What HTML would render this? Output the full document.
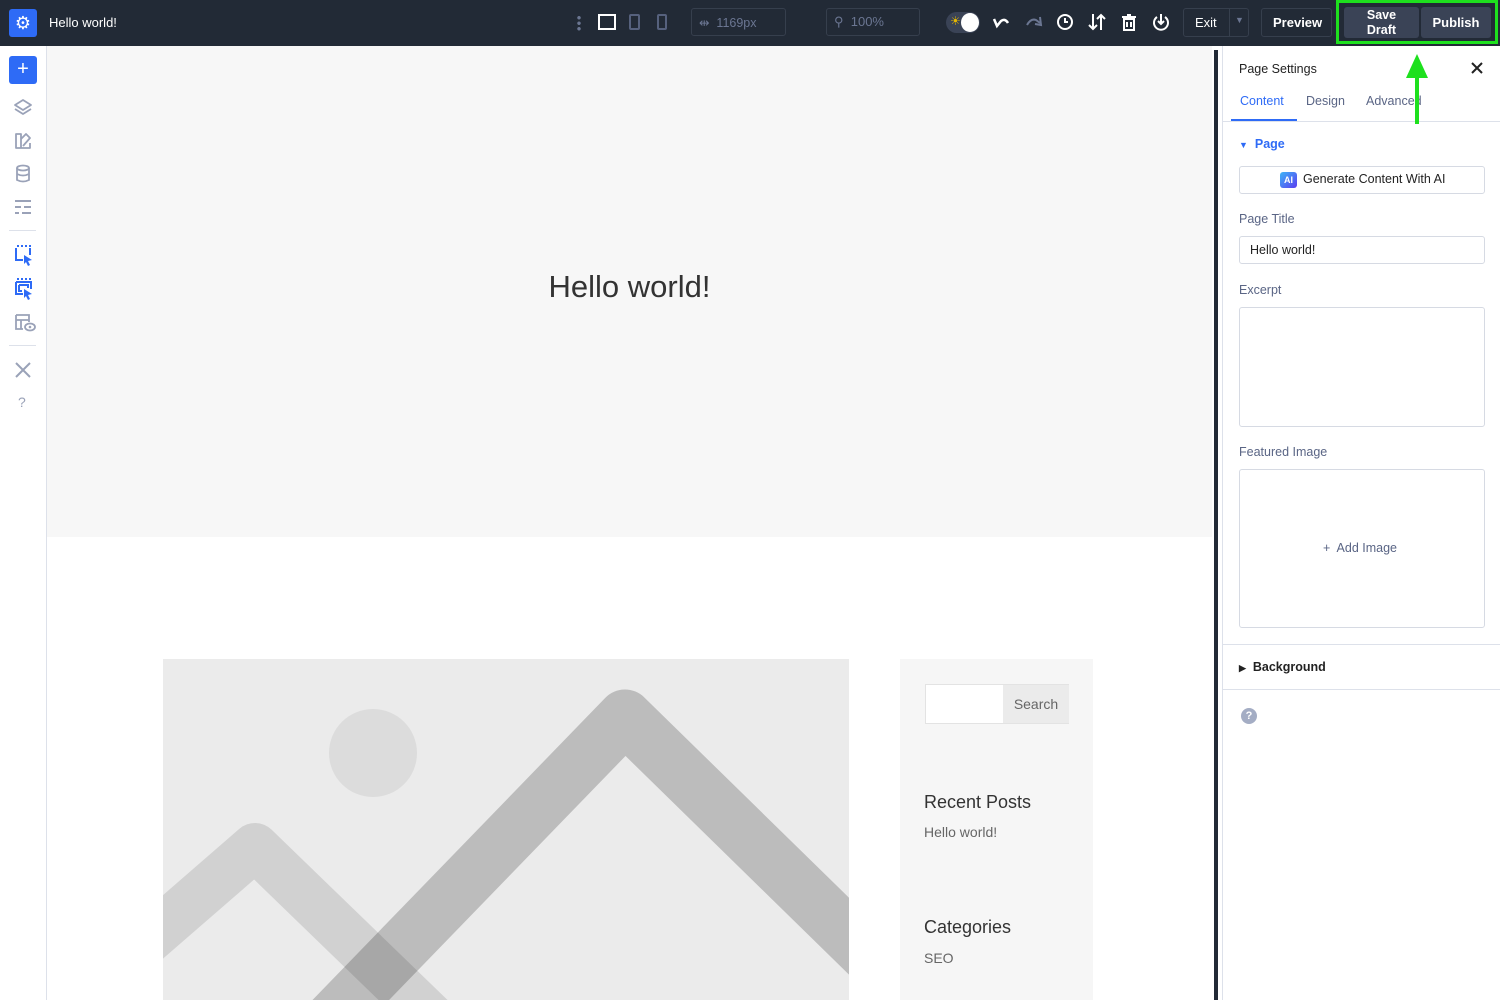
<!DOCTYPE html>
<html><head><meta charset="utf-8"><style>
*{box-sizing:border-box;margin:0;padding:0}
body{width:1500px;height:1000px;overflow:hidden;font-family:"Liberation Sans",sans-serif;background:#fff;position:relative}
.top{position:absolute;left:0;top:0;width:1500px;height:46px;background:#222a36;color:#fff}
.abs{position:absolute}
.box{position:absolute;border:1px solid #363f4d;border-radius:3px}
.side{position:absolute;left:0;top:46px;width:47px;height:954px;background:#fff;border-right:1px solid #dde1ea}
.panel{position:absolute;left:1222px;top:46px;width:278px;height:954px;background:#fff;border-left:1px solid #dde1ea}
.lbl{position:absolute;left:17px;font-size:12.5px;color:#5a6585}
.inp{position:absolute;left:17px;width:246px;border:1px solid #d6dae3;border-radius:3px;background:#fff}
</style></head><body>
<div class="top">
 <div class="abs" style="left:9px;top:9px;width:28px;height:28px;background:#2e6bf6;border-radius:3px;color:#fff;font-size:18px;text-align:center;line-height:28px">⚙</div>
 <div class="abs" style="left:49px;top:15px;font-size:13px">Hello world!</div>
 <div class="abs" style="left:577px;top:15px;width:4px;height:16px;background:radial-gradient(circle,#6b7692 1.5px,transparent 2px) 0 0/4px 5.5px"></div>
 <div class="abs" style="left:598px;top:14px;width:18px;height:16px;border:2px solid #fff"></div>
 <div class="abs" style="left:629px;top:14px;width:11px;height:16px;border:2px solid #56617d;border-radius:2px"></div>
 <div class="abs" style="left:657px;top:14px;width:10px;height:16px;border:2px solid #56617d;border-radius:2px"></div>
 <div class="box" style="left:691px;top:8px;width:95px;height:28px"></div>
 <div class="abs" style="left:699px;top:15px;font-size:12.5px;color:#6b7692">⇹ &nbsp;1169px</div>
 <div class="box" style="left:826px;top:8px;width:94px;height:28px"></div>
 <div class="abs" style="left:834px;top:14px;font-size:13px;color:#6b7692">⚲ &nbsp;100%</div>
 <div class="abs" style="left:946px;top:12px;width:34px;height:21px;background:#3a4356;border-radius:11px"></div>
 <div class="abs" style="left:961px;top:13px;width:18px;height:19px;background:#fff;border-radius:50%"></div>
 <div class="abs" style="left:950px;top:14px;color:#e6b800;font-size:12px">☀</div>
 <svg class="abs" style="left:992px;top:14px" width="18" height="16"><path d="M2 5 L5 12 L9 7 Q13 4 16 9" fill="none" stroke="#fff" stroke-width="2.5"/></svg>
 <svg class="abs" style="left:1025px;top:14px" width="18" height="16"><path d="M2 11 Q6 4 11 6 L15 9" fill="none" stroke="#6b7692" stroke-width="2"/><path d="M15 3 L16 11 L10 10" fill="none" stroke="#6b7692" stroke-width="2"/></svg>
 <svg class="abs" style="left:1056px;top:13px" width="18" height="18"><circle cx="9" cy="9" r="7" fill="none" stroke="#fff" stroke-width="2"/><path d="M9 5 V9 H12" fill="none" stroke="#fff" stroke-width="2"/></svg>
 <svg class="abs" style="left:1088px;top:13px" width="18" height="18"><path d="M5 1 V16 M1 12 L5 16 L9 12 M13 17 V2 M9 6 L13 2 L17 6" fill="none" stroke="#fff" stroke-width="2"/></svg>
 <svg class="abs" style="left:1120px;top:13px" width="18" height="18"><path d="M2 4 H16 M7 2 H11 M4 6 H14 V17 H4 Z M7 9 V14 M11 9 V14" fill="none" stroke="#fff" stroke-width="2"/></svg>
 <svg class="abs" style="left:1152px;top:13px" width="18" height="18"><path d="M5 4 A7 7 0 1 0 13 4" fill="none" stroke="#fff" stroke-width="2"/><path d="M9 1 V11 M6 8 L9 11 L12 8" fill="none" stroke="#fff" stroke-width="2"/></svg>
 <div class="box" style="left:1183px;top:8px;width:66px;height:29px"></div>
 <div class="abs" style="left:1229px;top:8px;width:1px;height:29px;background:#363f4d"></div>
 <div class="abs" style="left:1195px;top:15px;font-size:13px">Exit</div>
 <div class="abs" style="left:1235px;top:15px;font-size:9px;color:#6b7692">▼</div>
 <div class="box" style="left:1261px;top:8px;width:71px;height:29px"></div>
 <div class="abs" style="left:1273px;top:15px;font-size:13px;font-weight:bold">Preview</div>
 <div class="abs" style="left:1344px;top:7px;width:75px;height:31px;background:#3a4356;border-radius:3px;font-size:12.5px;text-align:center;line-height:15px;padding-top:1px;font-weight:bold">Save<br>Draft</div>
 <div class="abs" style="left:1421px;top:7px;width:70px;height:31px;background:#3a4356;border-radius:3px;font-size:13px;text-align:center;line-height:31px;font-weight:bold">Publish</div>
 <div class="abs" style="left:1336px;top:0;width:162px;height:44px;border:3px solid #1ee01e"></div>
</div>
<div class="side">
 <div class="abs" style="left:9px;top:10px;width:28px;height:28px;background:#2e6bf6;border-radius:3px;color:#fff;font-size:20px;text-align:center;line-height:27px">+</div>
 <svg class="abs" style="left:13px;top:52px" width="20" height="20"><path d="M10 2 L18 7 L10 12 L2 7 Z M2 11 L10 16 L18 11" fill="none" stroke="#9aa2b8" stroke-width="1.8" stroke-linejoin="round"/></svg>
 <svg class="abs" style="left:13px;top:85px" width="20" height="20"><path d="M3 3 H8 V17 H3 Z M8 8 L13 3 L17 7 L10 15 M8 17 H17 V12" fill="none" stroke="#9aa2b8" stroke-width="1.8" stroke-linejoin="round"/></svg>
 <svg class="abs" style="left:13px;top:118px" width="20" height="20"><ellipse cx="10" cy="4" rx="6" ry="2.5" fill="none" stroke="#9aa2b8" stroke-width="1.8"/><path d="M4 4 V16 Q10 19 16 16 V4 M4 10 Q10 13 16 10" fill="none" stroke="#9aa2b8" stroke-width="1.8"/></svg>
 <svg class="abs" style="left:13px;top:151px" width="20" height="20"><path d="M2 4 H18 M2 10 H8 M11 10 H18 M2 16 H6 M9 16 H18" stroke="#9aa2b8" stroke-width="2"/></svg>
 <div class="abs" style="left:9px;top:184px;width:27px;height:1px;background:#dde1ea"></div>
 <svg class="abs" style="left:13px;top:199px" width="22" height="22"><path d="M3 3 V15 H10 M17 10 V3" fill="none" stroke="#2e6bf6" stroke-width="2"/><path d="M4 1 h2 M8 1 h2 M12 1 h2 M16 1 h2" stroke="#2e6bf6" stroke-width="2"/><path d="M11 10 L19 15 L15 16 L17 20 L15 21 L13 17 L11 19 Z" fill="#2e6bf6"/></svg>
 <svg class="abs" style="left:13px;top:232px" width="22" height="22"><path d="M3 4 V16 H10 M18 11 V4 H3 M6 7 H15 V10 M6 7 V13 H9" fill="none" stroke="#2e6bf6" stroke-width="2"/><path d="M4 1 h2 M8 1 h2 M12 1 h2 M16 1 h2" stroke="#2e6bf6" stroke-width="2"/><path d="M11 11 L19 16 L15 17 L17 21 L15 22 L13 18 L11 20 Z" fill="#2e6bf6"/></svg>
 <svg class="abs" style="left:13px;top:266px" width="24" height="22"><path d="M3 3 H16 V10 M3 3 V17 H10 M3 8 H16 M8 8 V17" fill="none" stroke="#9aa2b8" stroke-width="1.8"/><ellipse cx="17" cy="15" rx="5" ry="3.5" fill="#fff" stroke="#9aa2b8" stroke-width="1.8"/><circle cx="17" cy="15" r="1.3" fill="#9aa2b8"/></svg>
 <div class="abs" style="left:9px;top:299px;width:27px;height:1px;background:#dde1ea"></div>
 <svg class="abs" style="left:13px;top:314px" width="20" height="20"><path d="M3 3 L17 17 M17 3 L3 17" stroke="#9aa2b8" stroke-width="2"/></svg>
 <div class="abs" style="left:18px;top:348px;font-size:14px;color:#9aa2b8">?</div>
</div>
<div class="abs" style="left:47px;top:46px;width:1165px;height:491px;background:#f7f7f7"></div>
<div class="abs" style="left:47px;top:269px;width:1165px;text-align:center;font-size:31px;color:#333;padding-left:-4px">Hello world!</div>
<svg class="abs" style="left:163px;top:659px" width="686" height="341">
 <rect width="686" height="341" fill="#ebebeb"/>
 <circle cx="210" cy="94" r="44" fill="#dcdcdc"/>
 <polyline points="-60,320 92,188 280,370" fill="none" stroke="#000" stroke-opacity="0.11" stroke-width="48" stroke-linejoin="round"/>
 <polyline points="150,380 462,58 740,330" fill="none" stroke="#000" stroke-opacity="0.2" stroke-width="55" stroke-linejoin="round"/>
</svg>
<div class="abs" style="left:900px;top:659px;width:193px;height:341px;background:#f6f6f6"></div>
<div class="abs" style="left:925px;top:684px;width:144px;height:40px;border:1px solid #e3e3e3;background:#fff"></div>
<div class="abs" style="left:1003px;top:685px;width:66px;height:38px;background:#ebebeb;color:#666;font-size:14px;text-align:center;line-height:38px">Search</div>
<div class="abs" style="left:924px;top:792px;font-size:18px;color:#333">Recent Posts</div>
<div class="abs" style="left:924px;top:824px;font-size:14px;color:#666">Hello world!</div>
<div class="abs" style="left:924px;top:917px;font-size:18px;color:#333">Categories</div>
<div class="abs" style="left:924px;top:950px;font-size:14px;color:#666">SEO</div>
<div class="abs" style="left:1212px;top:46px;width:10px;height:954px;background:#fff"></div>
<div class="abs" style="left:1214px;top:50px;width:4px;height:950px;background:#222a36"></div>
<div class="panel">
 <div class="abs" style="left:16px;top:16px;font-size:12.5px;color:#222">Page Settings</div>
 <svg class="abs" style="left:248px;top:16px" width="12" height="12"><path d="M1 1 L11 11 M11 1 L1 11" stroke="#222" stroke-width="2"/></svg>
 <div class="abs" style="left:17px;top:48px;font-size:12.5px;color:#2e6bf6">Content</div>
 <div class="abs" style="left:83px;top:48px;font-size:12.5px;color:#5a6585">Design</div>
 <div class="abs" style="left:143px;top:48px;font-size:12.5px;color:#5a6585">Advanced</div>
 <div class="abs" style="left:8px;top:73px;width:66px;height:3px;background:#2e6bf6"></div>
 <div class="abs" style="left:0;top:75px;width:278px;height:1px;background:#dde1ea"></div>
 <div class="abs" style="left:16px;top:91px;font-size:12.5px;color:#2e6bf6;font-weight:bold"><span style="font-size:9px">▼</span>&nbsp; Page</div>
 <div class="inp" style="left:16px;top:120px;height:28px"></div>
 <div class="abs" style="left:57px;top:126px;width:17px;height:16px;background:linear-gradient(135deg,#3fb5f7,#5a3df0);border-radius:3px;color:#fff;font-size:9px;font-weight:bold;text-align:center;line-height:16px">AI</div>
 <div class="abs" style="left:80px;top:126px;font-size:12.5px;color:#222">Generate Content With AI</div>
 <div class="lbl" style="left:16px;top:166px">Page Title</div>
 <div class="inp" style="left:16px;top:190px;height:28px"></div>
 <div class="abs" style="left:27px;top:197px;font-size:12.5px;color:#222">Hello world!</div>
 <div class="lbl" style="left:16px;top:237px">Excerpt</div>
 <div class="inp" style="left:16px;top:261px;height:120px"></div>
 <div class="lbl" style="left:16px;top:399px">Featured Image</div>
 <div class="inp" style="left:16px;top:423px;height:159px"></div>
 <div class="abs" style="left:100px;top:495px;font-size:12.5px;color:#5a6585">+&nbsp; Add Image</div>
 <div class="abs" style="left:0;top:598px;width:278px;height:1px;background:#dde1ea"></div>
 <div class="abs" style="left:16px;top:614px;font-size:12.5px;color:#222;font-weight:bold"><span style="font-size:9px">▶</span>&nbsp; Background</div>
 <div class="abs" style="left:0;top:643px;width:278px;height:1px;background:#dde1ea"></div>
 <div class="abs" style="left:18px;top:662px;width:16px;height:16px;border-radius:50%;background:#a4adc4;color:#fff;font-size:11px;text-align:center;line-height:16px;font-weight:bold">?</div>
</div>
<svg class="abs" style="left:1400px;top:52px" width="34" height="74"><polygon points="17,2 6,26 28,26" fill="#1ee01e"/><rect x="15" y="22" width="4" height="50" fill="#1ee01e"/></svg>
</body></html>
